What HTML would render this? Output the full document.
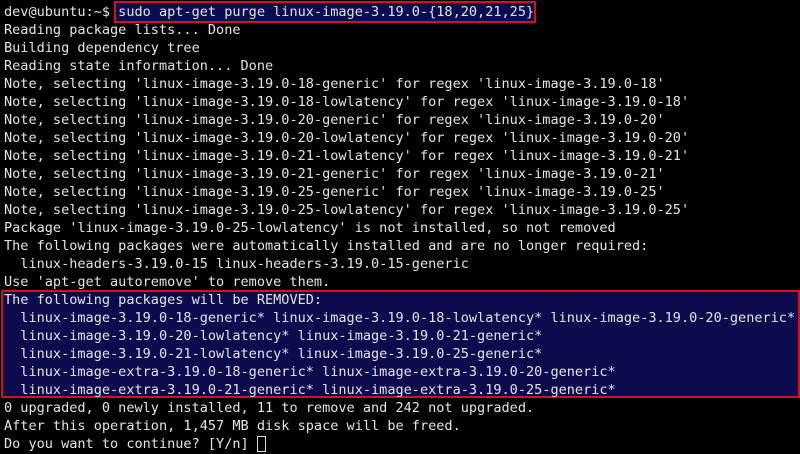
<!DOCTYPE html>
<html><head><style>
html,body{margin:0;padding:0;background:#000;width:800px;height:454px;overflow:hidden}
.t{position:absolute;left:4px;top:3px;font-family:"DejaVu Sans Mono","Liberation Mono",monospace;font-size:13.56px;line-height:18px;color:#e4e4e4;white-space:pre}
.b1{position:absolute;left:114px;top:1px;width:418px;height:18px;background:#0b0b52;border:2px solid #d0141e}
.b2{position:absolute;left:1px;top:290px;width:795px;height:104px;background:#0b0b4e;border:2px solid #d0141e}
.cur{display:inline-block;width:9px;height:16px;border:1px solid #ddd;box-sizing:border-box;vertical-align:-4px}
</style></head><body>
<div class="b1"></div><div class="b2"></div>
<div class="t">dev@ubuntu:~$ sudo apt-get purge linux-image-3.19.0-{18,20,21,25}
Reading package lists... Done
Building dependency tree
Reading state information... Done
Note, selecting 'linux-image-3.19.0-18-generic' for regex 'linux-image-3.19.0-18'
Note, selecting 'linux-image-3.19.0-18-lowlatency' for regex 'linux-image-3.19.0-18'
Note, selecting 'linux-image-3.19.0-20-generic' for regex 'linux-image-3.19.0-20'
Note, selecting 'linux-image-3.19.0-20-lowlatency' for regex 'linux-image-3.19.0-20'
Note, selecting 'linux-image-3.19.0-21-lowlatency' for regex 'linux-image-3.19.0-21'
Note, selecting 'linux-image-3.19.0-21-generic' for regex 'linux-image-3.19.0-21'
Note, selecting 'linux-image-3.19.0-25-generic' for regex 'linux-image-3.19.0-25'
Note, selecting 'linux-image-3.19.0-25-lowlatency' for regex 'linux-image-3.19.0-25'
Package 'linux-image-3.19.0-25-lowlatency' is not installed, so not removed
The following packages were automatically installed and are no longer required:
  linux-headers-3.19.0-15 linux-headers-3.19.0-15-generic
Use 'apt-get autoremove' to remove them.
The following packages will be REMOVED:
  linux-image-3.19.0-18-generic* linux-image-3.19.0-18-lowlatency* linux-image-3.19.0-20-generic*
  linux-image-3.19.0-20-lowlatency* linux-image-3.19.0-21-generic*
  linux-image-3.19.0-21-lowlatency* linux-image-3.19.0-25-generic*
  linux-image-extra-3.19.0-18-generic* linux-image-extra-3.19.0-20-generic*
  linux-image-extra-3.19.0-21-generic* linux-image-extra-3.19.0-25-generic*
0 upgraded, 0 newly installed, 11 to remove and 242 not upgraded.
After this operation, 1,457 MB disk space will be freed.
Do you want to continue? [Y/n] <span class="cur"></span></div>
</body></html>
